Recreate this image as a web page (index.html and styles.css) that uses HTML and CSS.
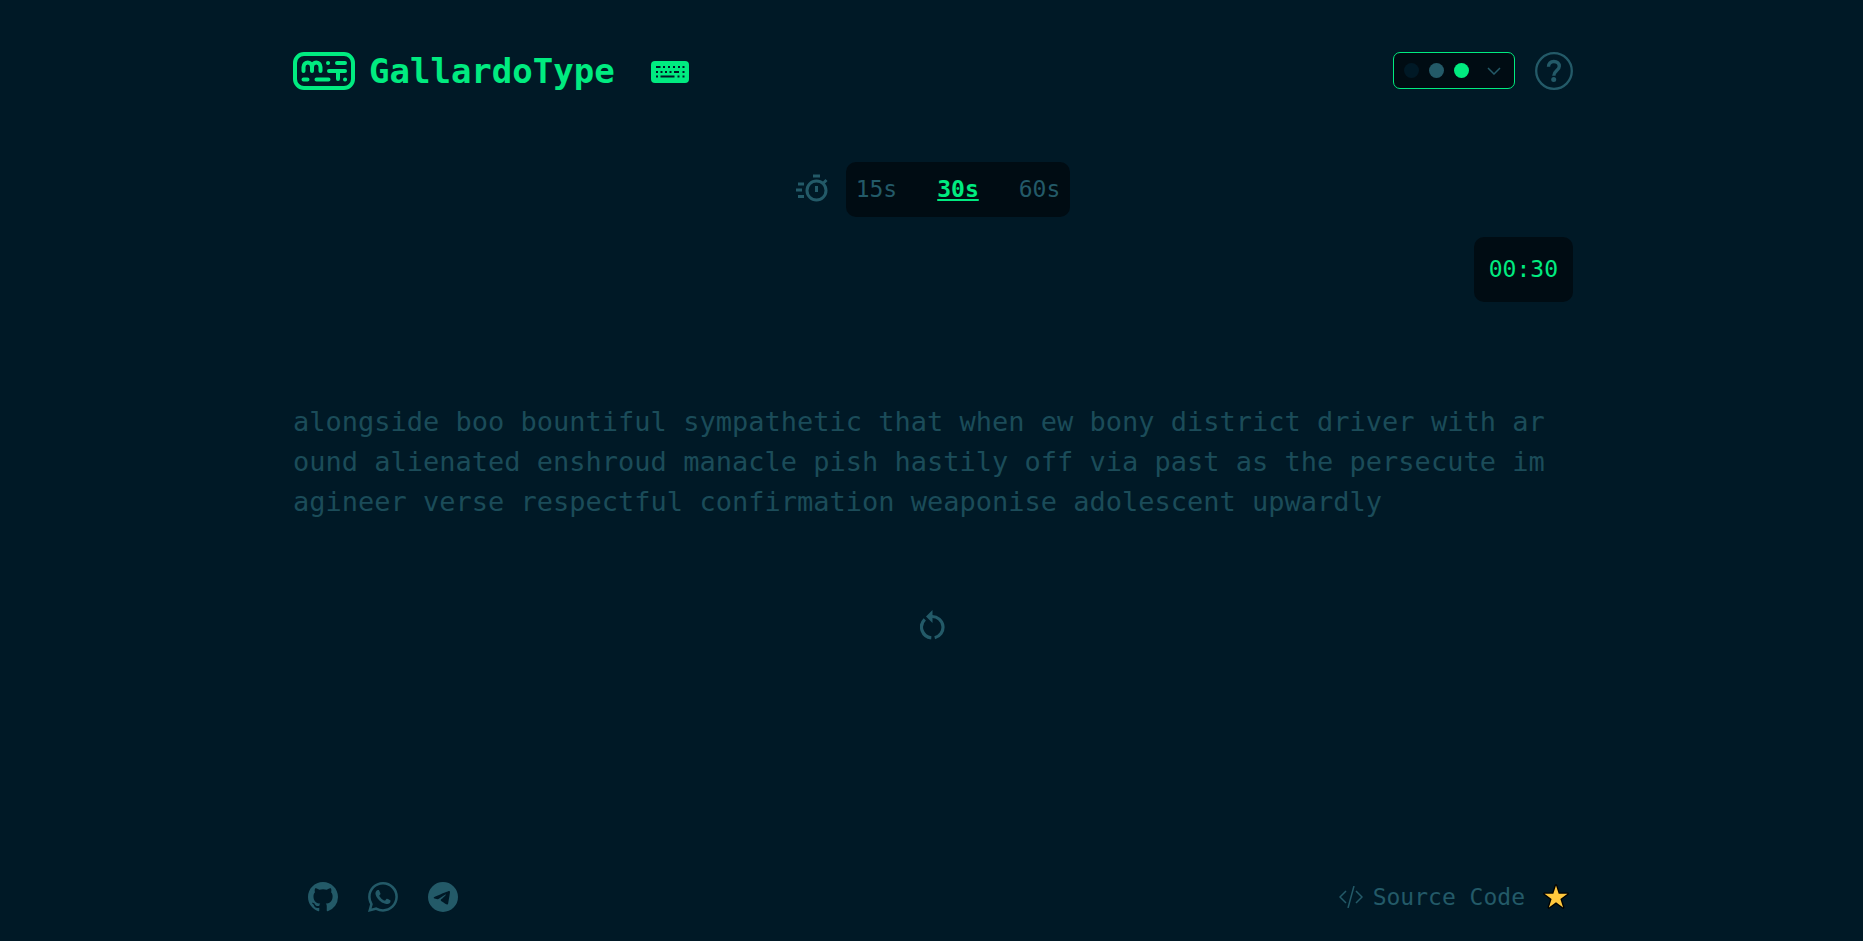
FILE: index.html
```html
<!DOCTYPE html>
<html lang="en">
<head>
<meta charset="utf-8">
<title>GallardoType</title>
<link rel="stylesheet" href="styles.css">
</head>
<body>
<div class="page">
  <header class="header">
    <a class="brand" href="#">
      <svg class="logo" viewBox="0 0 62 38" fill="none" stroke="currentColor" stroke-linecap="round" aria-hidden="true">
        <rect x="2" y="2" width="58" height="34" rx="9" stroke-width="4"/>
        <path stroke-width="4" stroke-linejoin="round" d="M10.500 19v-4c0-6 8.500-6 8.500 0v4M19 15c0-6 8.500-6 8.500 0v4M44 11h8M36 19h16M45 19v8M10.500 27.500h4M23.500 27.500h12M35 11h.1M52 27.500h.1"/>
      </svg>
      <h1 class="title">GallardoType</h1>
    </a>
    <a class="keyboard-link" href="#keyboard" aria-label="Keyboard">
      <svg class="keyboard" viewBox="0 0 38 22" aria-hidden="true">
        <rect width="38" height="22" rx="4" fill="currentColor"/>
        <path class="keys" d="M5 6h4.500M12 6h2M17 6h2M22 6h2M27 6h2M31.500 6h2M5 11h2M9.500 11h2M14 11h2M18.500 11h2M23 11h5M31.500 11h2M5 15.500h2M9.500 15.500h14M26.500 15.500h2M31.500 15.500h2"/>
      </svg>
    </a>
    <div class="header-tools">
      <button class="theme" type="button" aria-label="Choose theme">
        <span class="dot dot-bg"></span>
        <span class="dot dot-muted"></span>
        <span class="dot dot-accent"></span>
        <svg class="chevron" viewBox="0 0 14 8" aria-hidden="true"><path d="M1 1l6 6 6-6" fill="none" stroke="currentColor" stroke-width="1.500"/></svg>
      </button>
      <button class="icon-button" type="button" aria-label="Help">
        <svg class="help" viewBox="0 0 38 38" fill="none" stroke="currentColor" aria-hidden="true">
          <circle cx="19" cy="19" r="17.800" stroke-width="2.300"/>
          <path stroke-width="3.400" d="M13.500 14.800c0-3.300 2-5.300 5.300-5.300 3.400 0 5.500 2 5.500 4.700 0 4.300-5.500 4.500-5.500 9.600"/>
          <circle cx="18.700" cy="27.500" r="2.500" fill="currentColor" stroke="none"/>
        </svg>
      </button>
    </div>
  </header>

  <main class="main">
    <div class="options">
      <svg class="stopwatch" viewBox="0 0 32 32" fill="none" stroke="currentColor" aria-hidden="true">
        <circle cx="20.500" cy="16.500" r="9.500" stroke-width="3"/>
        <path stroke-width="3" d="M17 2h7M20.500 12v6M2 10h6M0 16h6M2 22.500h6M27 9.500l3.500-3.500"/>
      </svg>
      <div class="durations">
        <button class="duration" type="button">15s</button>
        <button class="duration duration-active" type="button" aria-pressed="true">30s</button>
        <button class="duration" type="button">60s</button>
      </div>
    </div>
    <div class="timer">00:30</div>
    <p class="words">alongside boo bountiful sympathetic that when ew bony district driver with around alienated enshroud manacle pish hastily off via past as the persecute imagineer verse respectful confirmation weaponise adolescent upwardly</p>
    <button class="icon-button restart" type="button" aria-label="Restart">
      <svg class="restart-icon" viewBox="0 0 26 30" aria-hidden="true">
        <path fill="none" stroke="currentColor" stroke-width="3.200" d="M4.800 9.300A10.800 10.800 0 0 0 11.300 27.800M14.700 27.800A10.800 10.800 0 0 0 12 6.500"/>
        <path fill="currentColor" d="M12.500 0v13L6 6.500z"/>
      </svg>
    </button>
  </main>

  <footer class="footer">
    <nav class="social" aria-label="Social links">
      <a href="#github" aria-label="GitHub"><svg class="social-icon" viewBox="0 0 16 16" fill="currentColor" aria-hidden="true"><path d="M8 0C3.580 0 0 3.580 0 8c0 3.540 2.290 6.530 5.470 7.590.4.070.55-.17.55-.38 0-.19-.01-.82-.01-1.490-2.010.37-2.530-.49-2.690-.94-.09-.23-.48-.94-.82-1.130-.28-.15-.68-.52-.01-.53.63-.01 1.080.58 1.230.82.72 1.210 1.870.87 2.330.66.07-.52.28-.87.51-1.070-1.780-.2-3.640-.89-3.640-3.950 0-.87.31-1.590.82-2.150-.08-.2-.36-1.020.08-2.120 0 0 .67-.21 2.200.82.64-.18 1.320-.27 2-.27s1.360.09 2 .27c1.530-1.040 2.200-.82 2.200-.82.44 1.100.16 1.920.08 2.120.51.56.82 1.270.82 2.150 0 3.070-1.870 3.750-3.650 3.950.29.25.54.73.54 1.480 0 1.070-.01 1.930-.01 2.200 0 .21.15.46.55.38A8.010 8.010 0 0 0 16 8c0-4.420-3.580-8-8-8z"/></svg></a>
      <a href="#whatsapp" aria-label="WhatsApp"><svg class="social-icon" viewBox="0 0 16 16" fill="currentColor" aria-hidden="true"><path d="M13.601 2.326A7.854 7.854 0 0 0 7.994 0C3.627 0 .068 3.558.064 7.926c0 1.399.366 2.760 1.057 3.965L0 16l4.204-1.102a7.933 7.933 0 0 0 3.790.965h.004c4.368 0 7.926-3.558 7.930-7.930A7.898 7.898 0 0 0 13.600 2.326zM7.994 14.521a6.573 6.573 0 0 1-3.356-.92l-.24-.144-2.494.654.666-2.433-.156-.251a6.560 6.560 0 0 1-1.007-3.505c0-3.626 2.957-6.584 6.591-6.584a6.560 6.560 0 0 1 4.660 1.931 6.557 6.557 0 0 1 1.928 4.660c-.004 3.639-2.961 6.592-6.592 6.592zm3.615-4.934c-.197-.099-1.170-.578-1.353-.646-.182-.065-.315-.099-.445.099-.133.197-.513.646-.627.775-.114.133-.232.148-.43.050-.197-.1-.836-.308-1.592-.985-.59-.525-.985-1.175-1.103-1.372-.114-.198-.011-.304.088-.403.087-.088.197-.232.296-.346.100-.114.133-.198.198-.33.065-.134.034-.248-.015-.347-.050-.099-.445-1.076-.612-1.470-.16-.389-.323-.335-.445-.34-.114-.007-.247-.007-.38-.007a.729.729 0 0 0-.529.247c-.182.198-.691.677-.691 1.654 0 .977.710 1.916.810 2.049.098.133 1.394 2.132 3.383 2.992.47.205.84.326 1.129.418.475.152.904.129 1.246.080.380-.058 1.171-.48 1.338-.943.164-.464.164-.86.114-.943-.049-.084-.182-.133-.38-.232z"/></svg></a>
      <a href="#telegram" aria-label="Telegram"><svg class="social-icon" viewBox="0 0 16 16" fill="currentColor" aria-hidden="true"><path d="M16 8A8 8 0 1 1 0 8a8 8 0 0 1 16 0zM8.287 5.906c-.778.324-2.334.994-4.666 2.010-.378.150-.577.298-.595.442-.030.243.275.339.690.470l.175.055c.408.133.958.288 1.243.294.260.006.549-.1.868-.32 2.179-1.471 3.304-2.214 3.374-2.230.050-.012.120-.026.166.016.047.041.042.120.037.141-.030.129-1.227 1.241-1.846 1.817-.193.180-.33.307-.358.336a8.154 8.154 0 0 1-.188.186c-.38.366-.664.640.015 1.088.327.216.589.393.850.571.284.194.568.387.936.629.093.060.183.125.270.187.331.236.630.448.997.414.214-.020.435-.220.547-.820.265-1.417.786-4.486.906-5.751a1.426 1.426 0 0 0-.013-.315.337.337 0 0 0-.114-.217.526.526 0 0 0-.31-.093c-.3.005-.763.166-2.984 1.090z"/></svg></a>
    </nav>
    <a class="source" href="#source">
      <svg class="code-icon" viewBox="0 0 24 22" fill="none" stroke="currentColor" stroke-width="1.500" aria-hidden="true"><path d="M7 5L1 11l6 6M17 5l6 6-6 6M15 0L9 22"/></svg>
      <span>Source Code</span>
      <svg class="star" viewBox="0 0 26 26" aria-hidden="true">
        <path id="star-shape" d="M13 1.500l2.700 8.300h8.800l-7.100 5.200 2.700 8.400L13 18.200l-7.100 5.200L8.600 15 1.500 9.800h8.800z" fill="#000" stroke="#000" stroke-width="2.600" stroke-linejoin="round"/>
        <path d="M13 1.500l2.700 8.300h8.800l-7.100 5.200 2.700 8.400L13 18.200l-7.100 5.200L8.600 15 1.500 9.800h8.800z" fill="#ffc83d"/>
      </svg>
    </a>
  </footer>
</div>
</body>
</html>
```
FILE: styles.css
```css
:root {
  --bg: #001926;
  --panel: #000c13;
  --muted: #235a68;
  --accent: #00eb80;
}

* {
  box-sizing: border-box;
}

body {
  margin: 0;
  background: var(--bg);
  color: var(--muted);
  font-family: "DejaVu Sans Mono", monospace;
  font-size: 23px;
  line-height: 27px;
}

a {
  color: inherit;
  text-decoration: none;
}

button {
  margin: 0;
  padding: 0;
  border: 0;
  background: none;
  color: inherit;
  font: inherit;
  cursor: pointer;
}

svg {
  display: block;
  flex-shrink: 0;
}

.page {
  display: flex;
  flex-direction: column;
  max-width: 1283px;
  min-height: 100vh;
  margin: 0 auto;
  padding: 51px 0 29px 3px;
}

.header,
.brand,
.header-tools,
.theme,
.options,
.durations,
.footer,
.social,
.source {
  display: flex;
  align-items: center;
}

.header {
  height: 39px;
  color: var(--accent);
}

.brand {
  gap: 14px;
}

.logo {
  width: 62px;
  height: 38px;
}

.title {
  margin: 0;
  font-size: 34px;
  line-height: 40px;
}

.keyboard-link {
  margin-left: 36px;
  padding-top: 3px;
}

.keyboard {
  width: 38px;
  height: 22px;
}

.keys {
  fill: none;
  stroke: var(--bg);
  stroke-width: 2;
}

.header-tools {
  gap: 20px;
  margin-left: auto;
  color: var(--muted);
}

.theme {
  gap: 10px;
  height: 37px;
  padding: 0 13px 0 10px;
  border: 1px solid var(--accent);
  border-radius: 7px;
  background: var(--panel);
}

.dot {
  width: 15px;
  height: 15px;
  border-radius: 50%;
}

.dot-bg {
  background: var(--bg);
}

.dot-muted {
  background: var(--muted);
}

.dot-accent {
  background: var(--accent);
}

.chevron {
  width: 14px;
  height: 8px;
  margin-left: 8px;
}

.help {
  width: 38px;
  height: 38px;
}

.main {
  display: flex;
  flex-direction: column;
}

.options {
  justify-content: center;
  gap: 18px;
  margin-top: 72px;
}

.stopwatch {
  width: 32px;
  height: 32px;
}

.durations {
  gap: 40px;
  padding: 14px 10px;
  border-radius: 10px;
  background: var(--panel);
}

.duration-active {
  color: var(--accent);
  font-weight: bold;
  text-decoration: underline;
}

.timer {
  align-self: flex-end;
  margin-top: 20px;
  padding: 19px 15px;
  border-radius: 10px;
  background: var(--panel);
  color: var(--accent);
}

.words {
  max-width: 77ch;
  margin: 100px 0 0;
  color: #1b4c59;
  font-size: 27px;
  line-height: 40px;
  word-break: break-all;
}

.restart {
  align-self: center;
  margin-top: 88px;
}

.restart-icon {
  width: 26px;
  height: 30px;
}

.footer {
  justify-content: space-between;
  margin-top: auto;
}

.social {
  gap: 30px;
  padding-left: 15px;
}

.social-icon {
  width: 30px;
  height: 30px;
}

.source {
  gap: 10px;
  padding-right: 4px;
}

.code-icon {
  width: 24px;
  height: 22px;
}

.star {
  width: 26px;
  height: 26px;
  margin-left: 8px;
}
```
